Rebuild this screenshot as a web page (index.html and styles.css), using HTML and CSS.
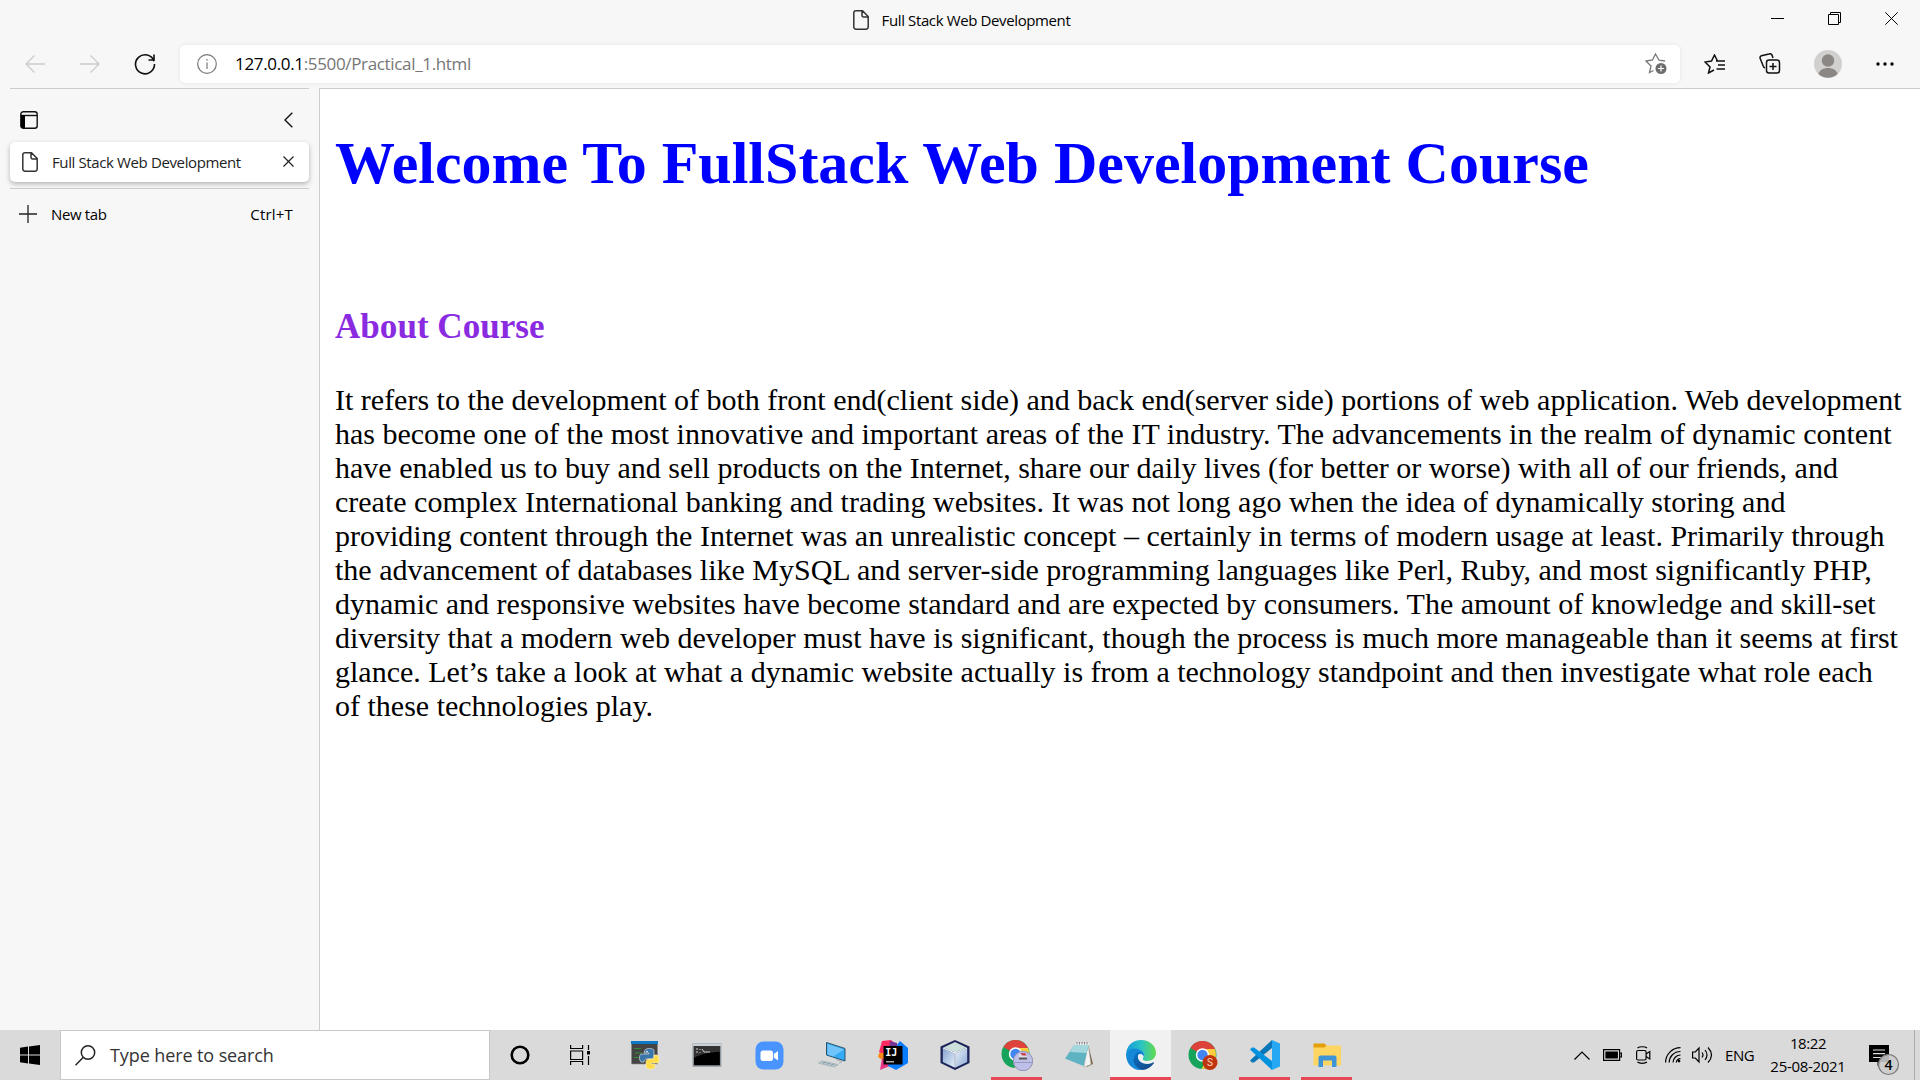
FILE: index.html
```html
<!DOCTYPE html>
<html lang="en">
<head>
<meta charset="utf-8">
<title>Full Stack Web Development</title>
<link rel="stylesheet" href="styles.css">
</head>
<body>
<div class="screen">
  <header class="titlebar">
    <div class="window-title">
      <svg class="doc-icon" width="16" height="20" viewBox="0 0 16 20"><path d="M3 .8h6.500L15.200 6.500V17a2.200 2.200 0 0 1-2.200 2.200H3A2.200 2.200 0 0 1 .8 17V3A2.200 2.200 0 0 1 3 .8zM9 1v4.500a1.500 1.500 0 0 0 1.500 1.500H15"/></svg>
      <span class="ui-text">Full Stack Web Development</span>
    </div>
    <div class="window-controls">
      <span><svg width="13" height="13" viewBox="0 0 13 13"><path d="M0 6.500h13"/></svg></span>
      <span><svg width="13" height="13" viewBox="0 0 13 13"><path d="M.5 2.500h10v10H.5zM2.500 2.500v-2h10v10h-2"/></svg></span>
      <span><svg width="13" height="13" viewBox="0 0 13 13"><path d="M.3.3l12.400 12.400M12.700.3L.3 12.700"/></svg></span>
    </div>
  </header>

  <nav class="toolbar">
    <div class="nav-buttons">
      <svg class="disabled" width="20" height="18" viewBox="0 0 20 18"><path d="M20 9H1M9.500.5L1 9l8.500 8.500"/></svg>
      <svg class="disabled" width="20" height="18" viewBox="0 0 20 18"><path d="M0 9h19M10.500.5L19 9l-8.500 8.500"/></svg>
      <svg class="reload" width="22" height="22" viewBox="0 0 22 22"><path d="M20 8.200A9.500 9.500 0 1 0 20.500 11M20 1.500V7h-5.500"/></svg>
    </div>
    <div class="address">
      <svg class="info" width="20" height="20" viewBox="0 0 20 20"><circle cx="10" cy="10" r="9.300"/><path d="M10 8.500V15M10 5v1.600"/></svg>
      <span class="url"><b>127.0.0.1</b>:5500/Practical_1.html</span>
      <svg class="add-fav" width="22" height="21" viewBox="0 0 22 21"><path class="line" d="M20 8l-6-.8L10.500 1 7.500 7 1 8l5 5-1.500 6.500 4-2"/><circle cx="16" cy="15.500" r="5.500"/><path class="plus" d="M16 12.500v6M13 15.500h6"/></svg>
    </div>
    <div class="actions">
      <svg width="22" height="20" viewBox="0 0 22 20"><path d="M13.500 7L10.500 1 7.500 7 1 8l5 5-1.500 6 5.500-3M12 7h9M14 11h7M12.500 15h8.500"/></svg>
      <svg width="22" height="21" viewBox="0 0 22 21"><rect x="7.500" y="7" width="13" height="13" rx="2.500"/><path d="M14 10v7M10.500 13.500h7M6 15c-1-.3-1.500-1-1.800-2L1.200 5.500c-.4-1.200 0-2.300 1.200-2.700L10 1c1.400-.5 2.700 0 3.200 1.500L14 5"/></svg>
      <svg class="avatar" width="28" height="28" viewBox="0 0 28 28"><circle class="disc" cx="14" cy="14" r="14"/><circle cx="14" cy="10.500" r="6.200"/><path d="M4.500 24c1.500-8 17.500-8 19 0A14 14 0 0 1 4.500 24z"/></svg>
      <svg class="dots" width="18" height="4" viewBox="0 0 18 4"><circle cx="2" cy="2" r="1.700"/><circle cx="9" cy="2" r="1.700"/><circle cx="16" cy="2" r="1.700"/></svg>
    </div>
  </nav>

  <div class="workspace">
    <aside class="sidebar">
      <div class="side-head">
        <svg width="18" height="18" viewBox="0 0 18 18"><rect x=".8" y=".8" width="16.400" height="16.400" rx="2.500"/><path d="M1 4.500h16"/><path class="solid" d="M1 4h4v13H2L1 16z"/></svg>
        <svg width="9" height="16" viewBox="0 0 9 16"><path d="M8.300.7L1 8l7.300 7.300"/></svg>
      </div>
      <div class="tab">
        <svg class="doc-icon" width="16" height="20" viewBox="0 0 16 20"><path d="M3 .8h6.500L15.200 6.500V17a2.200 2.200 0 0 1-2.200 2.200H3A2.200 2.200 0 0 1 .8 17V3A2.200 2.200 0 0 1 3 .8zM9 1v4.500a1.500 1.500 0 0 0 1.500 1.500H15"/></svg>
        <span class="ui-text">Full Stack Web Development</span>
        <svg class="close" width="11" height="11" viewBox="0 0 11 11"><path d="M.5.5l10 10M10.500.5l-10 10"/></svg>
      </div>
      <div class="new-tab">
        <svg width="18" height="18" viewBox="0 0 18 18"><path d="M9 0v18M0 9h18"/></svg>
        <span class="ui-text new-label">New tab</span>
        <span class="ui-text shortcut">Ctrl+T</span>
      </div>
    </aside>
    <main class="page">
      <h1>Welcome To FullStack Web Development Course</h1>
      <h2>About Course</h2>
      <p>It refers to the development of both front end(client side) and back end(server side) portions of web application. Web development<br>has become one of the most innovative and important areas of the IT industry. The advancements in the realm of dynamic content<br>have enabled us to buy and sell products on the Internet, share our daily lives (for better or worse) with all of our friends, and<br>create complex International banking and trading websites. It was not long ago when the idea of dynamically storing and<br>providing content through the Internet was an unrealistic concept – certainly in terms of modern usage at least. Primarily through<br>the advancement of databases like MySQL and server-side programming languages like Perl, Ruby, and most significantly PHP,<br>dynamic and responsive websites have become standard and are expected by consumers. The amount of knowledge and skill-set<br>diversity that a modern web developer must have is significant, though the process is much more manageable than it seems at first<br>glance. Let’s take a look at what a dynamic website actually is from a technology standpoint and then investigate what role each<br>of these technologies play.</p>
    </main>
  </div>

  <footer class="taskbar">
    <div class="start"><svg width="20" height="20" viewBox="0 0 20 20"><path d="M0 2.700L8 1.600V9.400H0zM9 1.400L20 0v9.400H9zM0 10.400h8v8L0 17.300zM9 10.400h11V20L9 18.500z"/></svg></div>
    <div class="search">
      <svg width="21" height="21" viewBox="0 0 21 21"><circle cx="13" cy="7.500" r="6.700"/><path d="M8.300 12.300L.5 20.200"/></svg>
      <span>Type here to search</span>
    </div>
    <div class="shell-buttons">
      <span><svg width="20" height="20" viewBox="0 0 20 20"><circle cx="10" cy="10" r="8.300" fill="none" stroke="#000" stroke-width="2.600"/></svg></span>
      <span><svg width="20" height="20" viewBox="0 0 20 20" fill="none" stroke="#000" stroke-width="1.200"><path d="M.6 0v3.500h12V0M.6 20v-3.500h12V20M.6 6h12v8.500H.6zM18.500 0v5M18.500 11v9"/><path fill="#000" stroke="none" d="M17 6h3v3.500h-3z"/></svg></span>
    </div>
    <div class="apps">
      <span><svg width="30" height="30" viewBox="0 0 30 30"><path fill="#444" stroke="#8a8a8a" stroke-width=".6" d="M1.500 2h26v22h-26z"/><path fill="#0b78c8" d="M1 1h27v3H1z"/><path stroke="#338b35" stroke-width="1.200" d="M4 8.500h7M5 13h7M4 17.500h7"/><path fill="#3975a8" stroke="#e8eef3" stroke-width=".6" d="M15 10c1-2 8-2 9 0v6c0 2-1 3-3 3h-5c-1 0-2 1-2 3h-3c-2-2-2-7 0-8h8v-1h-5z"/><path fill="#ffdc4b" stroke="#fff5ca" stroke-width=".6" d="M24 15h3c2 1 3 6 1 8h-7v1h4v3c-1 3-8 3-9 0v-5c0-2 1-3 3-3h3c2 0 2-2 2-4z"/><circle cx="17" cy="11.500" r=".8" fill="#fff"/></svg></span>
      <span><svg width="30" height="24" viewBox="0 0 30 24"><path fill="#000" stroke="#8e979d" stroke-width="1.400" d="M1.200 1h27.400v22H1.200z"/><path fill="#c7d1d7" d="M1 .5h28V3H1z"/><path fill="#333" d="M2 3h26v6C18 9 8 11 2 15z"/><path d="M4 6h2M4 9h2M8 6v1M8 9v.8M10 6l2 3h6" fill="none" stroke="#ccc" stroke-width="1"/></svg></span>
      <span><svg width="29" height="29" viewBox="0 0 29 29"><rect x=".5" y=".5" width="28" height="28" rx="8" fill="#4994ff"/><rect x="5.500" y="9.500" width="12.500" height="10.500" rx="2.500" fill="#fff"/><path fill="#fff" d="M18.800 13l4.200-3v9.500l-4.200-3z"/></svg></span>
      <span><svg width="30" height="28" viewBox="0 0 30 28"><path fill="#35aaf5" stroke="#29536a" d="M10.500 1.500l18.500 6V20L10.500 14z"/><path fill="#71c5fb" d="M11.500 3l16.500 5.500-11 7-5.500-2z"/><path fill="#cad6dc" stroke="#93a3ab" stroke-width=".7" d="M6 20l16 3.500-3.500 2.500-16-4z"/><path d="M5.500 21l15 3.500M10 21l-3.500 2M14 22l-3.500 2M18 23l-3.500 2M20 18.500l6 2-3 2" fill="none" stroke="#82949d" stroke-width=".6"/></svg></span>
      <span><svg width="30" height="30" viewBox="0 0 30 30"><path fill="#ff285f" d="M4 1l9-1 8 7-13 9-7-4z"/><path fill="#ff8a16" d="M1 13h6v9L0 17z"/><path fill="#e83486" d="M4 18l10 7-12 5z"/><path fill="#087cff" d="M18 6l4-5 8 7v15l-12 7-8-4z"/><path fill="#773895" d="M12 1l7 2v4l-8 1z"/><path fill="#000" d="M5.500 6h19v18.500h-19z"/><path fill="#aaa" d="M8 21h8v1.500H8z"/><text x="7.200" y="15.500" fill="#fff" font-family="DejaVu Sans Mono" font-weight="bold" font-size="10">IJ</text></svg></span>
      <span><svg width="30" height="30" viewBox="0 0 30 30"><defs><linearGradient id="cube-left" x2="1" y2="1"><stop stop-color="#86a3cf"/><stop offset="1" stop-color="#e4effa"/></linearGradient><linearGradient id="cube-right" x2="1" y2="1"><stop stop-color="#e6f1fa"/><stop offset="1" stop-color="#8ea9d2"/></linearGradient></defs><path fill="#1c2359" d="M15 0l14.500 6.500v16.500L15 30 .5 23V6.500z"/><path fill="#cce0db" d="M15 2L26.500 7.500 15 12.500 3.500 7.500z"/><path fill="url(#cube-left)" d="M2.800 8.500L14.500 13.500V27.500L2.800 22z"/><path fill="url(#cube-right)" d="M15.500 13.500l11.700-5V22l-11.700 5.500z"/><path d="M3 8l12 5 12-5M15 13v14.500" fill="none" stroke="#f5faff" stroke-width="1.200"/></svg></span>
      <span class="running"><svg width="32" height="32" viewBox="0 0 32 32"><g transform="translate(.5 1)"><circle cx="14" cy="14" r="14" fill="#16a45c"/><path fill="#de433b" d="M14 14L2 7C7-2 21-3 26.500 8H14z"/><path fill="#fdcf3e" d="M14 8h12.500C30 18 23 28 13 28l6-11z"/><circle cx="14" cy="14" r="6.700" fill="#fff"/><circle cx="14" cy="14" r="5.200" fill="#4285f4"/></g><circle cx="22" cy="22" r="9.700" fill="#bfc0e9" stroke="#8f92b3"/><path stroke="#9699bd" d="M12.500 23.500h19"/><path fill="#dedee8" d="M18 15h8v5h-8z"/><path fill="#c74855" d="M19.500 14h4.500l2 2.500h-5z"/><path stroke="#555" stroke-width="2" d="M18 19.500h8"/></svg></span>
      <span><svg width="30" height="30" viewBox="0 0 30 30"><path fill="#7b6548" d="M24 4l5 20-6 3z"/><path fill="#f4f4f2" stroke="#aaa" stroke-width=".6" d="M24 3.500l3 21-7 2.500z"/><path fill="#5eb2c2" d="M11 4h14l-5.500 22L1 18.500z"/><path fill="#a5d7de" d="M11 4h14l-2.500 9L6 12z"/><path fill="#eceeed" d="M11.500 3h14l-.4 2H10.500z"/><path d="M13 2v2.500M15.500 2v2.500M18 2v2.500M20.500 2v2.500M23 2v2.500" stroke="#777" stroke-width=".9"/></svg></span>
      <span class="running current"><svg width="30" height="30" viewBox="0 0 30 30"><defs><linearGradient id="edge-top" x1="0" x2="1"><stop stop-color="#1598df"/><stop offset=".5" stop-color="#2bc3c6"/><stop offset="1" stop-color="#62dc4c"/></linearGradient><linearGradient id="edge-low" x2=".6" y2="1"><stop stop-color="#0b74ca"/><stop offset="1" stop-color="#124b8d"/></linearGradient></defs><path fill="url(#edge-top)" d="M0 14C1 5 7 0 15 0c9 0 15 6 15 13 0 5-4 8-9 8-3 0-5-1-4-3 3-4 0-7-5-8-5 0-9 1-12 4z"/><path fill="#1688d8" d="M0 14c3-5 9-7 14-4 3 1 5 4 4 7-2-5-8-3-8 2 0 5 3 9 6 11C7 31 0 24 0 14z"/><path fill="url(#edge-low)" d="M12 12c-7 5-6 14 4 18 5 0 9-3 12-7 0-1-1-1-2 0-8 3-15-2-14-7 0-2 1-3 3-4z"/></svg></span>
      <span><svg width="30" height="30" viewBox="0 0 30 30"><g transform="translate(.5 1)"><circle cx="14" cy="14" r="14" fill="#16a45c"/><path fill="#de433b" d="M14 14L2 7C7-2 21-3 26.500 8H14z"/><path fill="#fdcf3e" d="M14 8h12.500C30 18 23 28 13 28l6-11z"/><circle cx="14" cy="14" r="6.700" fill="#fff"/><circle cx="14" cy="14" r="5.200" fill="#4285f4"/></g><circle cx="22" cy="22.500" r="7.500" fill="#bd340d"/><text x="22" y="26" text-anchor="middle" fill="#ffd8c9" font-family="Roboto" font-size="10">S</text></svg></span>
      <span class="running"><svg width="30" height="30" viewBox="0 0 30 30"><path fill="#0877b9" d="M0 20.500L22 0v8L4 22.500H2z"/><path fill="#0091df" d="M0 9.500l2-2h2L22 21v9z"/><path fill="#26a9f2" d="M22 0l8 3.500v23L22 30z"/></svg></span>
      <span class="running"><svg width="28" height="24" viewBox="0 0 28 24"><path fill="#e3a008" d="M.5.500h11l2 2-2 3h-11z"/><path fill="#ffd561" d="M.5 4.500h11l2-2H28V22.500H.500z"/><path fill="#3e94d6" d="M5.500 24V14.500a2 2 0 0 1 2-2h14a2 2 0 0 1 2 2V24H19v-6.500h-9V24z"/></svg></span>
    </div>
    <div class="tray">
      <svg class="t-up" width="16" height="9" viewBox="0 0 16 9"><path d="M.5 8.500L8 1l7.500 7.500"/></svg>
      <svg class="t-battery" width="19" height="12" viewBox="0 0 19 12"><path d="M.6.6h16v10.800H.600zM17 4h1.400v4H17"/><path fill="#000" d="M3 3h11.300v6H3z"/></svg>
      <svg class="t-camera" width="15" height="18" viewBox="0 0 15 18"><rect x=".6" y="4.500" width="9.500" height="9.500" rx="1.500"/><path d="M10 8l3.800-2.500v7.500L10 10.500M1.500 2c2-1.700 7.500-1.700 9.500 0M1.500 16c2 1.700 7.500 1.700 9.500 0"/></svg>
      <svg class="t-wifi" width="16" height="16" viewBox="0 0 16 16"><path d="M.6 15.500C.6 7.500 7 .6 15.500.6M4.200 15.500C4.200 9.500 9 4.500 15.500 4.500M8 15.500c0-4 3.500-7.500 7.500-7.500M11.300 15.500c0-2 2-4 4.200-4"/><circle cx="14" cy="14" r="1.400" fill="#000" stroke="none"/></svg>
      <svg class="t-sound" width="21" height="18" viewBox="0 0 21 18"><path d="M.6 6h2.700L7 2v14l-3.700-4H.6zM10 6.500q2 2.500 0 5M13 4q4 5 0 10M16 1.500q7 7.500 0 15"/></svg>
      <span class="lang">ENG</span>
      <div class="clock"><span class="time">18:22</span><span class="date">25-08-2021</span></div>
      <svg class="t-notes" width="31" height="31" viewBox="0 0 31 31"><path fill="#000" stroke="none" d="M0 0h20v17h-8l-3.500 4v-4H0z"/><path stroke="#ddd" d="M4 5h12M4 8.700h12M4 12.500h8"/><circle cx="19.500" cy="19.500" r="10" fill="#ccc" fill-opacity=".88" stroke="#777"/><text x="19.500" y="24.700" text-anchor="middle" fill="#000" stroke="none" font-family="Open Sans" font-size="14" font-weight="600">4</text></svg>
    </div>
    <div class="show-desktop"></div>
  </footer>
</div>
</body>
</html>
```
FILE: styles.css
```css
* { box-sizing: border-box; }
body { margin: 0; background: #f7f7f7; font-family: "Open Sans", "Noto Sans", sans-serif; color: #000; }
svg { display: block; flex: none; }
.screen { width: 1920px; height: 1080px; display: flex; flex-direction: column; overflow: hidden; }
.ui-text { font-size: 15px; line-height: 20px; letter-spacing: -0.38px; white-space: nowrap; padding-bottom: 1px; }

.titlebar { height: 45px; display: grid; grid-template-columns: 171px 1fr 171px; }
.window-title { grid-column: 2; display: flex; justify-content: center; align-items: center; gap: 13px; height: 40px; padding-left: 3px; }
.doc-icon { fill: none; stroke: #333; stroke-width: 1.5; }
.window-controls { display: grid; grid-template-columns: repeat(3, 57px); height: 37px; }
.window-controls span { display: grid; place-items: center; }
.window-controls svg { fill: none; stroke: #000; stroke-width: 1; }

.toolbar { height: 43px; display: flex; align-items: flex-start; }
.nav-buttons { width: 180px; height: 37px; display: flex; align-items: center; gap: 35px; padding-left: 25px; }
.nav-buttons svg { fill: none; stroke: #111; stroke-width: 1.6; }
.nav-buttons .disabled { stroke: #ccc; stroke-width: 1.3; }
.nav-buttons .reload { margin-left: -1px; }
.address { width: 1500px; height: 38px; display: flex; align-items: center; padding: 0 13px 1px 17px; background: #fff; border-radius: 5px; box-shadow: 0 0 4px rgba(0, 0, 0, .08); }
.info { fill: none; stroke: #777; stroke-width: 1.2; margin-right: 18px; }
.url { font-size: 17px; letter-spacing: -0.34px; color: #767676; white-space: nowrap; padding-bottom: 1px; }
.url b { font-weight: 400; color: #000; }
.add-fav { margin-left: auto; fill: #6d6d6d; }
.add-fav .line { fill: none; stroke: #777; stroke-width: 1.3; }
.add-fav .plus { stroke: #fff; stroke-width: 1.2; }
.actions { flex: 1; height: 37px; display: flex; align-items: center; padding-left: 24px; gap: 33px; }
.actions svg { fill: none; stroke: #111; stroke-width: 1.5; }
.actions .avatar { stroke: none; fill: #8b8785; }
.actions .avatar .disc { fill: #d2d0ce; }
.actions .dots { fill: #000; stroke: none; margin-left: 1px; }

.workspace { height: 942px; display: flex; }
.sidebar { width: 319px; padding: 0 10px; }
.side-head { height: 54px; border-top: 1px solid #ccc; display: flex; align-items: center; justify-content: space-between; padding: 8px 16px 0 10px; }
.side-head svg { fill: none; stroke: #111; stroke-width: 1.4; }
.side-head .solid { fill: #000; stroke: none; }
.tab { height: 40px; display: flex; align-items: center; padding: 0 15px 1px 12px; background: #fff; border-radius: 5px; box-shadow: 0 2px 5px rgba(0, 0, 0, .28); }
.tab .ui-text { margin-left: 14px; color: #222; padding-bottom: 0; }
.close { margin-left: auto; fill: none; stroke: #222; stroke-width: 1.2; }
.new-tab { margin-top: 6px; height: 51px; border-top: 1px solid #ccc; display: flex; align-items: center; padding: 0 16px 0 9px; }
.new-tab svg { fill: none; stroke: #222; stroke-width: 1.3; }
.new-label { margin-left: 14px; }
.shortcut { margin-left: auto; letter-spacing: .2px; }

.page { flex: 1; background: #fff; border-top: 1px solid #ccc; border-left: 1px solid #ccc; padding: 40px 0 0 15px; font-family: "Liberation Serif", serif; white-space: nowrap; overflow: hidden; }
.page h1 { margin: 0; font-size: 60px; line-height: 68px; color: #00f; }
.page h2 { margin: 109px 0 0; font-size: 35.1px; line-height: 42px; color: #8a2be2; }
.page p { margin: 35px 0 0; font-size: 30px; line-height: 34px; }

.taskbar { height: 50px; display: flex; background: #dadada; }
.start { width: 60px; display: grid; place-items: center; }
.search { width: 430px; background: #fff; border: 1px solid #c8c8c8; display: flex; align-items: center; gap: 14px; padding-left: 14px; font-size: 18px; letter-spacing: -0.1px; color: #333; }
.search svg { fill: none; stroke: #222; stroke-width: 1.5; }
.shell-buttons { display: grid; grid-template-columns: 60px 60px; width: 124px; }
.shell-buttons span { display: grid; place-items: center; }
.apps { display: grid; grid-template-columns: repeat(12, 62px); }
.apps span { display: grid; place-items: center; }
.running { background: linear-gradient(#e74856, #e74856) 5px bottom / 51px 3px no-repeat; }
.current { background-color: #f1f1f1; background-position: 0 bottom; background-size: 100% 3px; margin-right: 1px; }
.tray { flex: 1; display: flex; align-items: center; padding-left: 216px; }
.tray svg { fill: none; stroke: #000; stroke-width: 1.2; }
.t-battery { margin-left: 13px; }
.t-camera { margin-left: 14px; }
.t-wifi { margin-left: 14px; }
.t-sound { margin-left: 11px; }
.lang { margin-left: 12px; width: 30px; font-size: 15px; letter-spacing: -0.4px; }
.clock { margin-left: 14px; width: 78px; display: flex; flex-direction: column; align-items: center; font-size: 15px; line-height: 23px; letter-spacing: -0.4px; white-space: nowrap; }
.date { letter-spacing: -0.3px; }
.t-notes { margin: 10px 0 0 22px; }
.show-desktop { width: 6px; border-left: 1px solid #aaa; }
```
